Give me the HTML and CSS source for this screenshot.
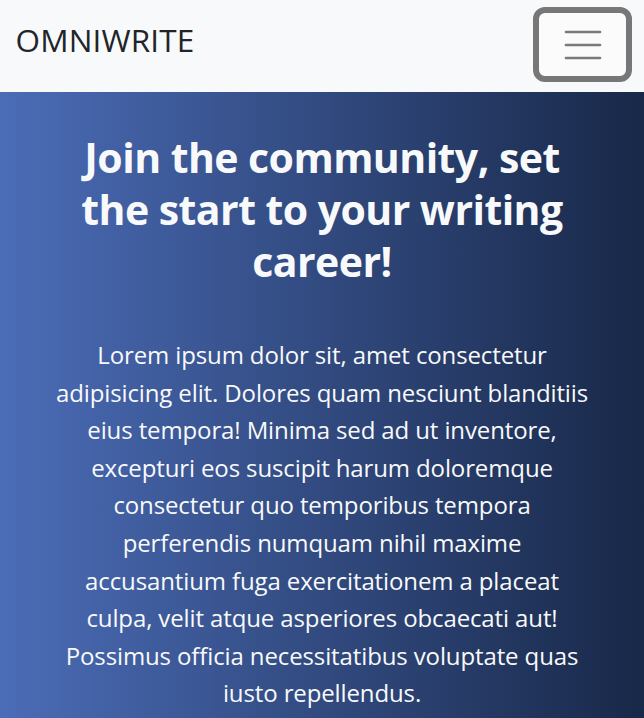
FILE: index.html
```html
<!DOCTYPE html>
<html lang="en">
<head>
<meta charset="utf-8">
<title>OmniWrite</title>
<link rel="stylesheet" href="styles.css">
</head>
<body>
<nav class="navbar">
  <a class="brand" href="#">OMNIWRITE</a>
  <button class="toggler" type="button" aria-label="Toggle navigation">
    <svg class="toggler-icon" width="40" height="32" viewBox="0 0 40 32" aria-hidden="true">
      <path d="M3 3H37M3 16H37M3 29H37" fill="none" stroke="#7a7a7a" stroke-width="2.7" stroke-linecap="round"/>
    </svg>
  </button>
</nav>
<section class="hero">
  <h1 class="hero-title">Join the community, set<br>the start to your writing<br>career!</h1>
  <p class="hero-text">Lorem ipsum dolor sit, amet consectetur<br>adipisicing elit. Dolores quam nesciunt blanditiis<br>eius tempora! Minima sed ad ut inventore,<br>excepturi eos suscipit harum doloremque<br>consectetur quo temporibus tempora<br>perferendis numquam nihil maxime<br>accusantium fuga exercitationem a placeat<br>culpa, velit atque asperiores obcaecati aut!<br>Possimus officia necessitatibus voluptate quas<br>iusto repellendus.</p>
</section>
</body>
</html>
```
FILE: styles.css
```css
html, body {
  margin: 0;
  padding: 0;
}
body {
  font-family: "Open Sans", "Noto Sans", sans-serif;
  color: #212529;
  background: #182848;
}
.navbar {
  display: flex;
  justify-content: space-between;
  align-items: flex-start;
  height: 92px;
  box-sizing: border-box;
  padding: 7px 12px 0 15.5px;
  background: #f8f9fa;
}
.brand {
  margin-top: 10px;
  font-size: 31.5px;
  letter-spacing: 0.15px;
  line-height: 45px;
  color: #212529;
  text-decoration: none;
}
.toggler {
  display: flex;
  align-items: center;
  justify-content: center;
  width: 99px;
  height: 75px;
  box-sizing: border-box;
  padding: 0;
  border: 6px solid #777777;
  border-radius: 12px;
  background: #fbfbfc;
}
.toggler-icon {
  display: block;
}
.hero {
  background: linear-gradient(to right, #4b6cb7, #182848);
  color: #f8f9fa;
  text-align: center;
  padding: 39px 12px 40px;
  min-height: 626px;
  box-sizing: border-box;
}
.hero-title {
  margin: 0;
  font-size: 41px;
  font-weight: 700;
  letter-spacing: -0.55px;
  line-height: 52px;
}
.hero-text {
  margin: 49px 0 0;
  font-size: 24px;
  letter-spacing: -0.12px;
  line-height: 37.6px;
}
```
